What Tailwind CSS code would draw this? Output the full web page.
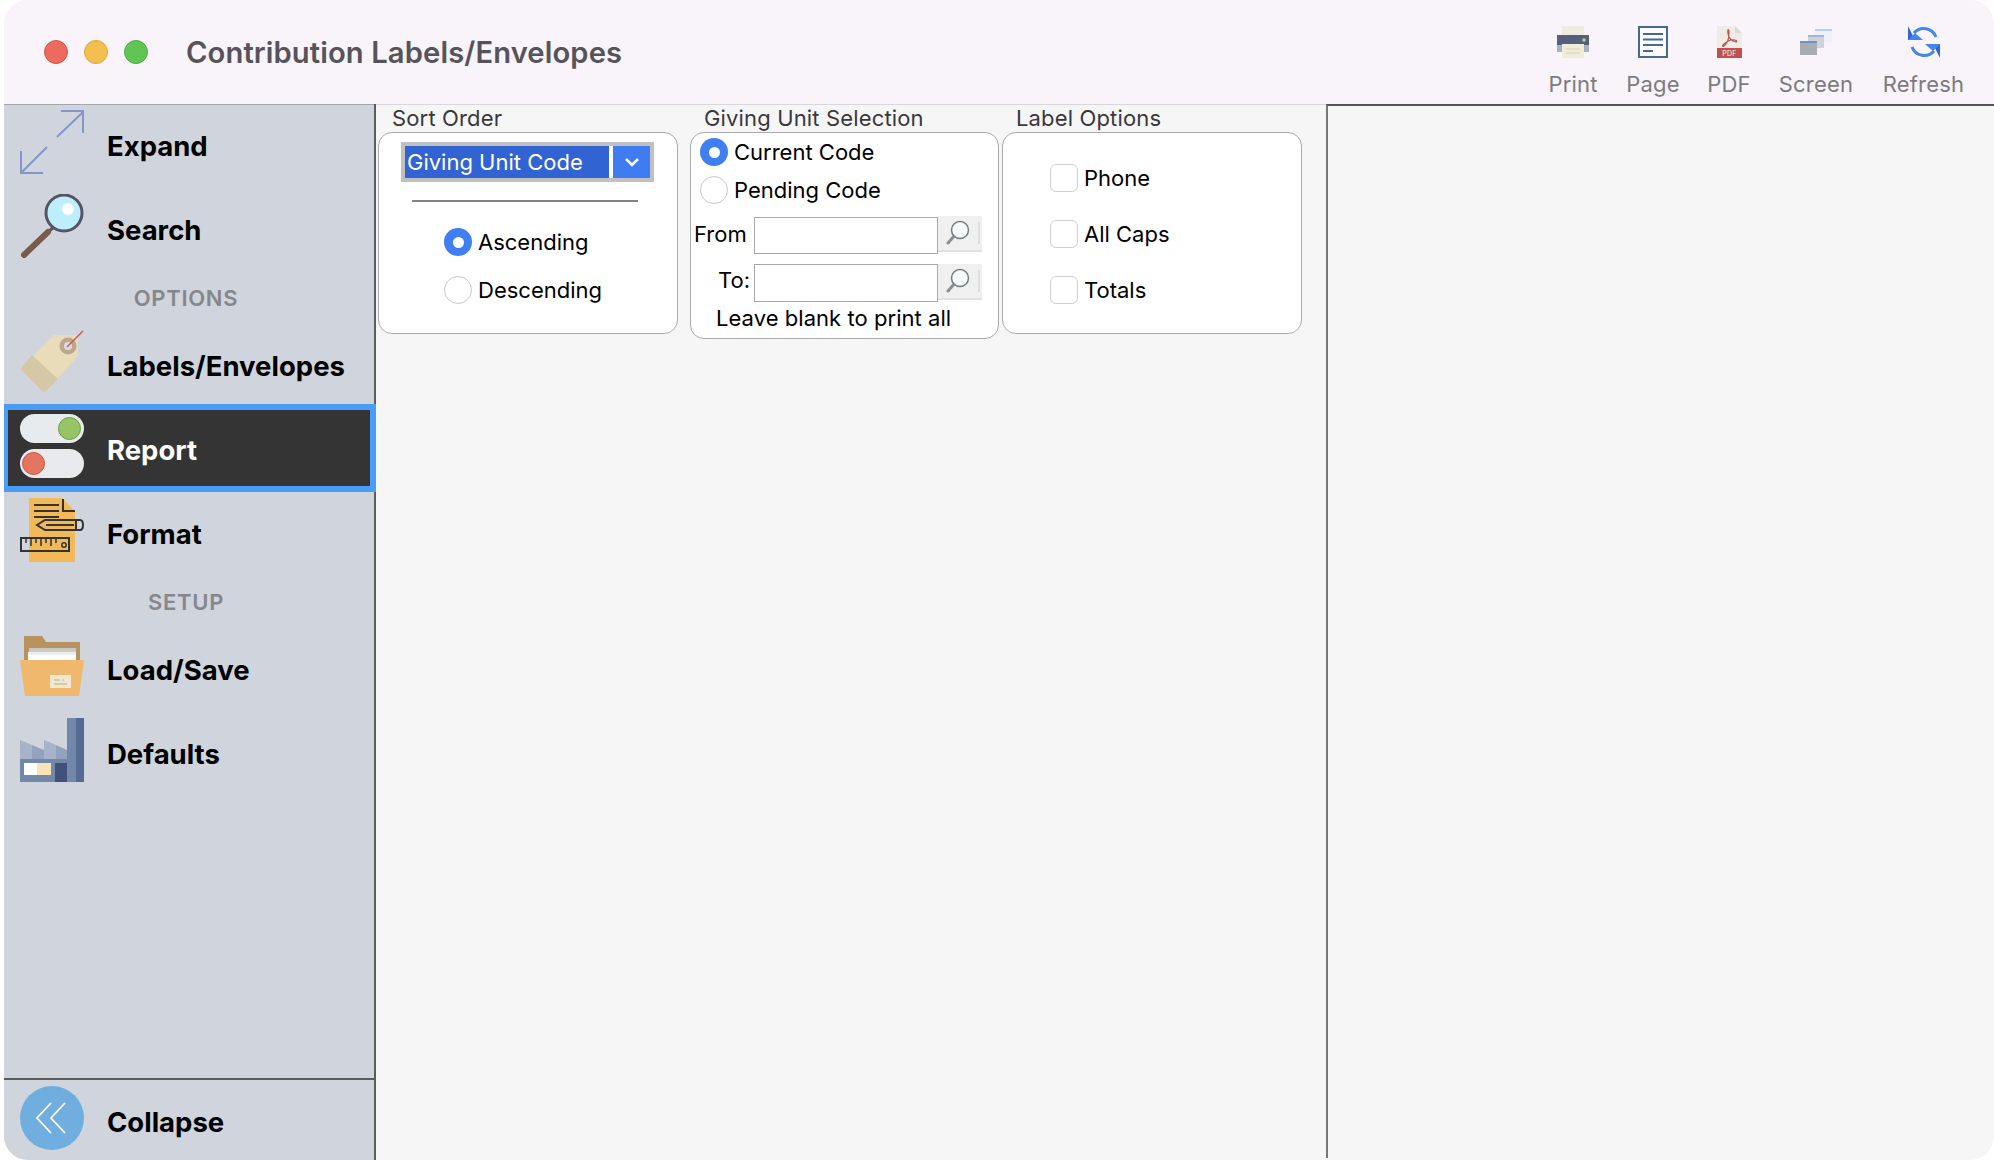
<!DOCTYPE html>
<html>
<head>
<meta charset="utf-8">
<script src="https://cdn.jsdelivr.net/npm/@tailwindcss/browser@4"></script>
</head>
<body class="bg-white">
<div class="w-[1994px] h-[1160px] pl-[4px] overflow-hidden font-['Inter','Liberation_Sans',sans-serif]">
  <div class="w-[1990px] h-[1160px] rounded-[24px] overflow-hidden flex flex-col bg-[#f6f6f6]">
    <header class="h-[104px] shrink-0 bg-[#f8f4f9] flex items-center relative">
      <div class="flex gap-[16px] pl-[40px]">
        <span class="w-[24px] h-[24px] rounded-full bg-[#ec6a5e] border border-[#d5574c]"></span>
        <span class="w-[24px] h-[24px] rounded-full bg-[#f4bf4f] border border-[#d9a53f]"></span>
        <span class="w-[24px] h-[24px] rounded-full bg-[#61c554] border border-[#52a948]"></span>
      </div>
      <h1 class="ml-[38px] mt-[2px] text-[29.2px] font-semibold text-[#57535a] tracking-[0.1px]">Contribution Labels/Envelopes</h1>
      <div class="ml-auto flex items-start text-[22px] text-[#7d7a80] tracking-[0.2px] mr-[30px] pt-[26px] h-full">
        <div class="flex flex-col items-center w-[50px] mr-[30px]">
          <svg class="w-[32px] h-[32px]" viewBox="0 0 32 32"><rect x="5" y="0" width="22" height="10" fill="#f0ede0"/><rect x="0" y="9" width="32" height="13" fill="#56607e"/><rect x="0" y="19" width="5" height="7" fill="#aab0c0"/><rect x="27" y="19" width="5" height="7" fill="#aab0c0"/><rect x="5" y="18" width="22" height="14" fill="#efecd9"/><path d="M9 23h14M9 27h14" stroke="#d8d3b0" stroke-width="1"/><circle cx="27" cy="14" r="1.800" fill="#a7e06f"/></svg>
          <span class="mt-[12px] leading-[28px]">Print</span>
        </div>
        <div class="flex flex-col items-center w-[50px] mr-[29px]">
          <svg class="w-[30px] h-[32px]" viewBox="0 0 30 32"><rect x="1" y="1" width="28" height="30" fill="#fbfbfd" stroke="#48688f" stroke-width="2"/><path d="M5 8h20M5 13.500h20M5 19h20M5 25h10" stroke="#48688f" stroke-width="2"/></svg>
          <span class="mt-[12px] leading-[28px]">Page</span>
        </div>
        <div class="flex flex-col items-center w-[44px] mr-[28px]">
          <svg class="w-[25px] h-[32px]" viewBox="0 0 25 32"><path d="M0 0H18L25 7V32H0Z" fill="#efece6"/><path d="M18 0L25 7H18Z" fill="#ddd9d0"/><path d="M0 22H25V32H0Z" fill="#c0504d"/><path d="M11 4c-1 2 0 4 1 7 1 2 3 4 7 5 1 0 1-2-1-2-4-1-8 1-12 5-1 1 0 2 1 1 3-2 5-8 5-14 0-2-1-3-1-2Z" fill="none" stroke="#c0504d" stroke-width="1.200"/><text x="12.500" y="30" text-anchor="middle" font-size="7" fill="#fff">PDF</text></svg>
          <span class="mt-[12px] leading-[28px]">PDF</span>
        </div>
        <div class="flex flex-col items-center w-[74px] mr-[30px]">
          <svg class="w-[32px] h-[26px] mt-[3px] mb-[3px]" viewBox="0 0 32 26"><rect x="15" y="0" width="17" height="13" fill="#edf0f6"/><rect x="15" y="0" width="17" height="2" fill="#bcd0e8"/><rect x="8" y="6" width="16" height="13" fill="#cfd2d8"/><rect x="8" y="6" width="16" height="2" fill="#9db8d6"/><rect x="0" y="12" width="17" height="14" fill="#a9acb2"/><rect x="0" y="12" width="17" height="2" fill="#6b95bf"/></svg>
          <span class="mt-[12px] leading-[28px]">Screen</span>
        </div>
        <div class="flex flex-col items-center w-[81px]">
          <svg class="w-[32px] h-[32px]" viewBox="0 0 32 32"><path d="M6 7A13 13 0 0 1 28 11" fill="none" stroke="#4286ee" stroke-width="3"/><path d="M26 25A13 13 0 0 1 4 21" fill="none" stroke="#4286ee" stroke-width="3"/><path d="M0 0V14H7Z" fill="#2f66d4"/><path d="M0 14L7 7L15 14Z" fill="#4286ee"/><path d="M32 32V18H25Z" fill="#2f66d4"/><path d="M32 18L25 25L17 18Z" fill="#4286ee"/></svg>
          <span class="mt-[12px] leading-[28px]">Refresh</span>
        </div>
      </div>
    </header>
    <div class="flex-1 flex min-h-0">
      <aside class="w-[372px] shrink-0 bg-[#d0d4dc] border-r-2 border-[#5c5c5c] flex flex-col relative font-bold text-[27.5px] text-black">
        <div class="h-[1px] shrink-0 bg-[#a4a6ae]"></div>
        <div class="h-[82px] flex items-center pl-[16px] shrink-0">
          <svg class="w-[64px] h-[64px] mt-[-8px]" viewBox="0 0 64 64" fill="none" stroke="#8595cc" stroke-width="2"><path d="M37 27L63 2M41 1H63V23M27 37L1 63M1 41V63H23"/></svg>
          <span class="ml-[23px] mt-[1px]">Expand</span>
        </div>
        <div class="h-[86px] flex items-center pl-[16px] shrink-0">
          <svg class="w-[64px] h-[64px] mt-[-8px]" viewBox="0 0 64 64"><path d="M28 38L35 32" stroke="#565365" stroke-width="3"/><path d="M28 38L4 61" stroke="#7a5a4a" stroke-width="6" stroke-linecap="round"/><circle cx="44" cy="19" r="18" fill="#bdeefc" stroke="#565365" stroke-width="3"/><circle cx="48" cy="15" r="6" fill="#fff"/></svg>
          <span class="ml-[23px] mt-[1px]">Search</span>
        </div>
        <div class="h-[53px] shrink-0 pt-[9px] flex items-start justify-center text-[22px] font-semibold text-[#85878c] tracking-[0.7px] pr-[6px]">OPTIONS</div>
        <div class="h-[78px] flex items-center pl-[16px] shrink-0">
          <svg class="w-[64px] h-[64px] mt-[-8px]" viewBox="0 0 64 64"><path d="M34 6H58V27L26 62Q24 64 22 62L2 42Q0 40 2 38Z" fill="#e9dcb9"/><path d="M12 26L38 50L26 62Q24 64 22 62L2 42Q0 40 2 38Z" fill="#d6c8a6"/><circle cx="48" cy="17" r="8.500" fill="#bba88d"/><circle cx="48" cy="17" r="4" fill="#dedce0"/><path d="M47 18L63 2" stroke="#cc5550" stroke-width="1.500"/></svg>
          <span class="ml-[23px] mt-[4px]">Labels/Envelopes</span>
        </div>
        <div class="h-[88px] shrink-0 ml-[-2px] mr-[-2px] relative bg-[#343434] border-[6px] border-[#4a9df7] flex items-center text-white pl-[12px] z-10">
          <div class="flex flex-col gap-[6px] w-[64px] mt-[-4px]">
            <div class="h-[29px] rounded-full bg-[#e8ebed] flex items-center justify-end pr-[3px]"><span class="w-[21px] h-[21px] rounded-full bg-[#98c468] border border-[#6f9d4a] box-content"></span></div>
            <div class="h-[29px] rounded-full bg-[#e8ebed] flex items-center pl-[2px]"><span class="w-[21px] h-[21px] rounded-full bg-[#e57460] border border-[#c55a4a] box-content"></span></div>
          </div>
          <span class="ml-[23px] mt-[6px]">Report</span>
        </div>
        <div class="h-[84px] flex items-center pl-[16px] shrink-0">
          <svg class="w-[64px] h-[64px] mt-[-8px]" viewBox="0 0 64 64"><path d="M9 0H42L55 13V64H9Z" fill="#f1b958"/><path d="M14 7H39M14 13H39M14 19H39" stroke="#333" stroke-width="2"/><path d="M43 1V13H55" fill="none" stroke="#333" stroke-width="2"/><path d="M17 27L25 22H60Q63 22 63 27T60 32H25Z" fill="none" stroke="#333" stroke-width="2"/><path d="M26 27H54M56 23V31" stroke="#333" stroke-width="2"/><rect x="1" y="40" width="48" height="13" fill="none" stroke="#333" stroke-width="2"/><path d="M6 40v5M11 40v8M16 40v5M21 40v8M26 40v5M31 40v8M36 40v5" stroke="#333" stroke-width="1.500"/><circle cx="44" cy="47" r="2.200" fill="none" stroke="#333" stroke-width="1.500"/></svg>
          <span class="ml-[23px] mt-[1px]">Format</span>
        </div>
        <div class="h-[52px] shrink-0 flex items-center justify-center text-[22px] font-semibold text-[#85878c] tracking-[0.7px] pr-[6px]">SETUP</div>
        <div class="h-[84px] flex items-center pl-[16px] shrink-0">
          <svg class="w-[64px] h-[60px] mt-[-8px]" viewBox="0 0 64 60"><path d="M4 0H22L26 6H60V30H4Z" fill="#b9935f"/><rect x="9" y="12" width="47" height="14" fill="#c8cac6"/><rect x="8" y="16" width="48" height="12" fill="#eceef0"/><rect x="8" y="19" width="48" height="10" fill="#fff"/><path d="M0 24H64L59 60H5Z" fill="#efb86d"/><rect x="30" y="39" width="21" height="13" fill="#f0e9cf"/><path d="M34 44H40M42 44H44M34 48H47" stroke="#c9c0a5" stroke-width="1.500"/></svg>
          <span class="ml-[23px] mt-[1px]">Load/Save</span>
        </div>
        <div class="h-[84px] flex items-center pl-[16px] shrink-0">
          <svg class="w-[64px] h-[64px] mt-[-8px]" viewBox="0 0 64 64"><rect x="47" y="0" width="17" height="64" fill="#556b91"/><rect x="47" y="0" width="9" height="64" fill="#7288ab"/><path d="M0 22L12 27V64H0Z" fill="#a7b3c9"/><path d="M12 27L24 32V64H12Z" fill="#94a3bd"/><path d="M24 22L36 27V64H24Z" fill="#a7b3c9"/><path d="M36 27L47 32V64H36Z" fill="#94a3bd"/><rect x="0" y="41" width="47" height="23" fill="#7288ab"/><rect x="4" y="45" width="13" height="12" fill="#fff"/><rect x="17" y="45" width="14" height="12" fill="#fae3b5"/><rect x="35" y="45" width="12" height="19" fill="#41527a"/></svg>
          <span class="ml-[23px] mt-[1px]">Defaults</span>
        </div>
        <div class="mt-auto h-[82px] border-t-2 border-[#5c5c5c] flex items-center pl-[16px] shrink-0">
          <span class="w-[64px] h-[64px] rounded-full bg-[#70aee0] flex items-center justify-center mt-[-4px]">
            <svg class="w-[30px] h-[32px] mr-[2px]" viewBox="0 0 30 32" fill="none" stroke="#fff" stroke-width="1.800"><path d="M15 1L1 16L15 31M29 1L15 16L29 31"/></svg>
          </span>
          <span class="ml-[23px] mt-[6px]">Collapse</span>
        </div>
      </aside>
      <main class="flex-1 text-[22px] text-black relative border-t border-[#d8d8dc]">
        <div class="flex items-start pl-[2px]">
          <section class="w-[300px] shrink-0">
            <h2 class="h-[27px] leading-[27px] pl-[14px] text-[#38383c] tracking-[0.15px]">Sort Order</h2>
            <div class="h-[202px] bg-white rounded-[14px] border border-[#aaaaaa] flex flex-col">
              <div class="mt-[9px] ml-[22px] w-[253px] h-[40px] border-[4px] border-[#c0c0c0] flex bg-white text-white">
                <div class="w-[204px] h-full bg-[#3163d3] pl-[2px] leading-[32px] whitespace-nowrap">Giving Unit Code</div>
                <div class="ml-[4px] flex-1 bg-[#3f7cf1] flex items-center justify-center">
                  <svg class="w-[14px] h-[10px]" viewBox="0 0 14 10" fill="none" stroke="#fff" stroke-width="2.500"><path d="M1 2L7 8L13 2"/></svg>
                </div>
              </div>
              <div class="mt-[18px] ml-[33px] w-[226px] h-[2px] bg-[#828282]"></div>
              <div class="ml-[65px] mt-[26px] flex items-center gap-[6px] h-[28px]">
                <span class="w-[28px] h-[28px] rounded-full bg-[#3f7ff2] flex items-center justify-center"><span class="w-[11px] h-[11px] rounded-full bg-white"></span></span>Ascending
              </div>
              <div class="ml-[65px] mt-[20px] flex items-center gap-[6px] h-[28px]">
                <span class="w-[28px] h-[28px] rounded-full bg-white border border-[#c9c9c9]"></span>Descending
              </div>
            </div>
          </section>
          <section class="w-[309px] shrink-0 ml-[12px]">
            <h2 class="h-[27px] leading-[27px] pl-[14px] text-[#38383c] tracking-[0.15px]">Giving Unit Selection</h2>
            <div class="h-[207px] bg-white rounded-[14px] border border-[#aaaaaa] flex flex-col pl-[9px]">
              <div class="mt-[5px] flex items-center gap-[6px] h-[28px]">
                <span class="w-[28px] h-[28px] rounded-full bg-[#3f7ff2] flex items-center justify-center"><span class="w-[11px] h-[11px] rounded-full bg-white"></span></span>Current Code
              </div>
              <div class="mt-[10px] flex items-center gap-[6px] h-[28px]">
                <span class="w-[28px] h-[28px] rounded-full bg-white border border-[#c9c9c9]"></span>Pending Code
              </div>
              <div class="mt-[13px] flex items-start h-[37px] ml-[-6px] leading-[35px]">
                <span class="w-[60px]">From</span>
                <span class="w-[184px] h-[37px] bg-white border border-[#aaaaaa]"></span>
                <span class="w-[44px] h-[36px] mt-[-1px] bg-[#f0f0f0] border-b-2 border-[#e2e2e2] flex items-center justify-center relative">
                  <svg class="w-[24px] h-[26px] mr-[4px]" viewBox="0 0 24 26"><path d="M9 15L2 23" stroke="#8f8f8a" stroke-width="3" stroke-linecap="round"/><circle cx="14" cy="10" r="8.500" fill="#f6fbfd" stroke="#6f7c85" stroke-width="1.500"/></svg>
                  <span class="absolute right-[2px] top-[6px] bottom-[6px] w-[2px] bg-[#dedede]"></span>
                </span>
              </div>
              <div class="mt-[10px] flex items-start h-[38px] ml-[-6px] leading-[33px]">
                <span class="w-[60px] pl-[24px]">To:</span>
                <span class="w-[184px] h-[38px] bg-white border border-[#aaaaaa]"></span>
                <span class="w-[44px] h-[36px] bg-[#f0f0f0] border-b-2 border-[#e2e2e2] flex items-center justify-center relative">
                  <svg class="w-[24px] h-[26px] mr-[4px]" viewBox="0 0 24 26"><path d="M9 15L2 23" stroke="#8f8f8a" stroke-width="3" stroke-linecap="round"/><circle cx="14" cy="10" r="8.500" fill="#f6fbfd" stroke="#6f7c85" stroke-width="1.500"/></svg>
                  <span class="absolute right-[2px] top-[6px] bottom-[6px] w-[2px] bg-[#dedede]"></span>
                </span>
              </div>
              <div class="mt-[2px] pl-[16px] leading-[28px] whitespace-nowrap tracking-[0.05px]">Leave blank to print all</div>
            </div>
          </section>
          <section class="w-[300px] shrink-0 ml-[3px]">
            <h2 class="h-[27px] leading-[27px] pl-[14px] text-[#38383c] tracking-[0.15px]">Label Options</h2>
            <div class="h-[202px] bg-white rounded-[14px] border border-[#aaaaaa] flex flex-col pl-[47px] pt-[31px] gap-[28px]">
              <div class="flex items-center gap-[6px] h-[28px]"><span class="w-[28px] h-[28px] rounded-[6px] bg-white border border-[#cfcfcf]"></span>Phone</div>
              <div class="flex items-center gap-[6px] h-[28px]"><span class="w-[28px] h-[28px] rounded-[6px] bg-white border border-[#cfcfcf]"></span>All Caps</div>
              <div class="flex items-center gap-[6px] h-[28px]"><span class="w-[28px] h-[28px] rounded-[6px] bg-white border border-[#cfcfcf]"></span>Totals</div>
            </div>
          </section>
        </div>
      </main>
      <aside class="w-[668px] shrink-0 mb-[2px] border-l-2 border-t-2 border-l-[#777777] border-t-[#555555]"></aside>
    </div>
  </div>
</div>
</body>
</html>
